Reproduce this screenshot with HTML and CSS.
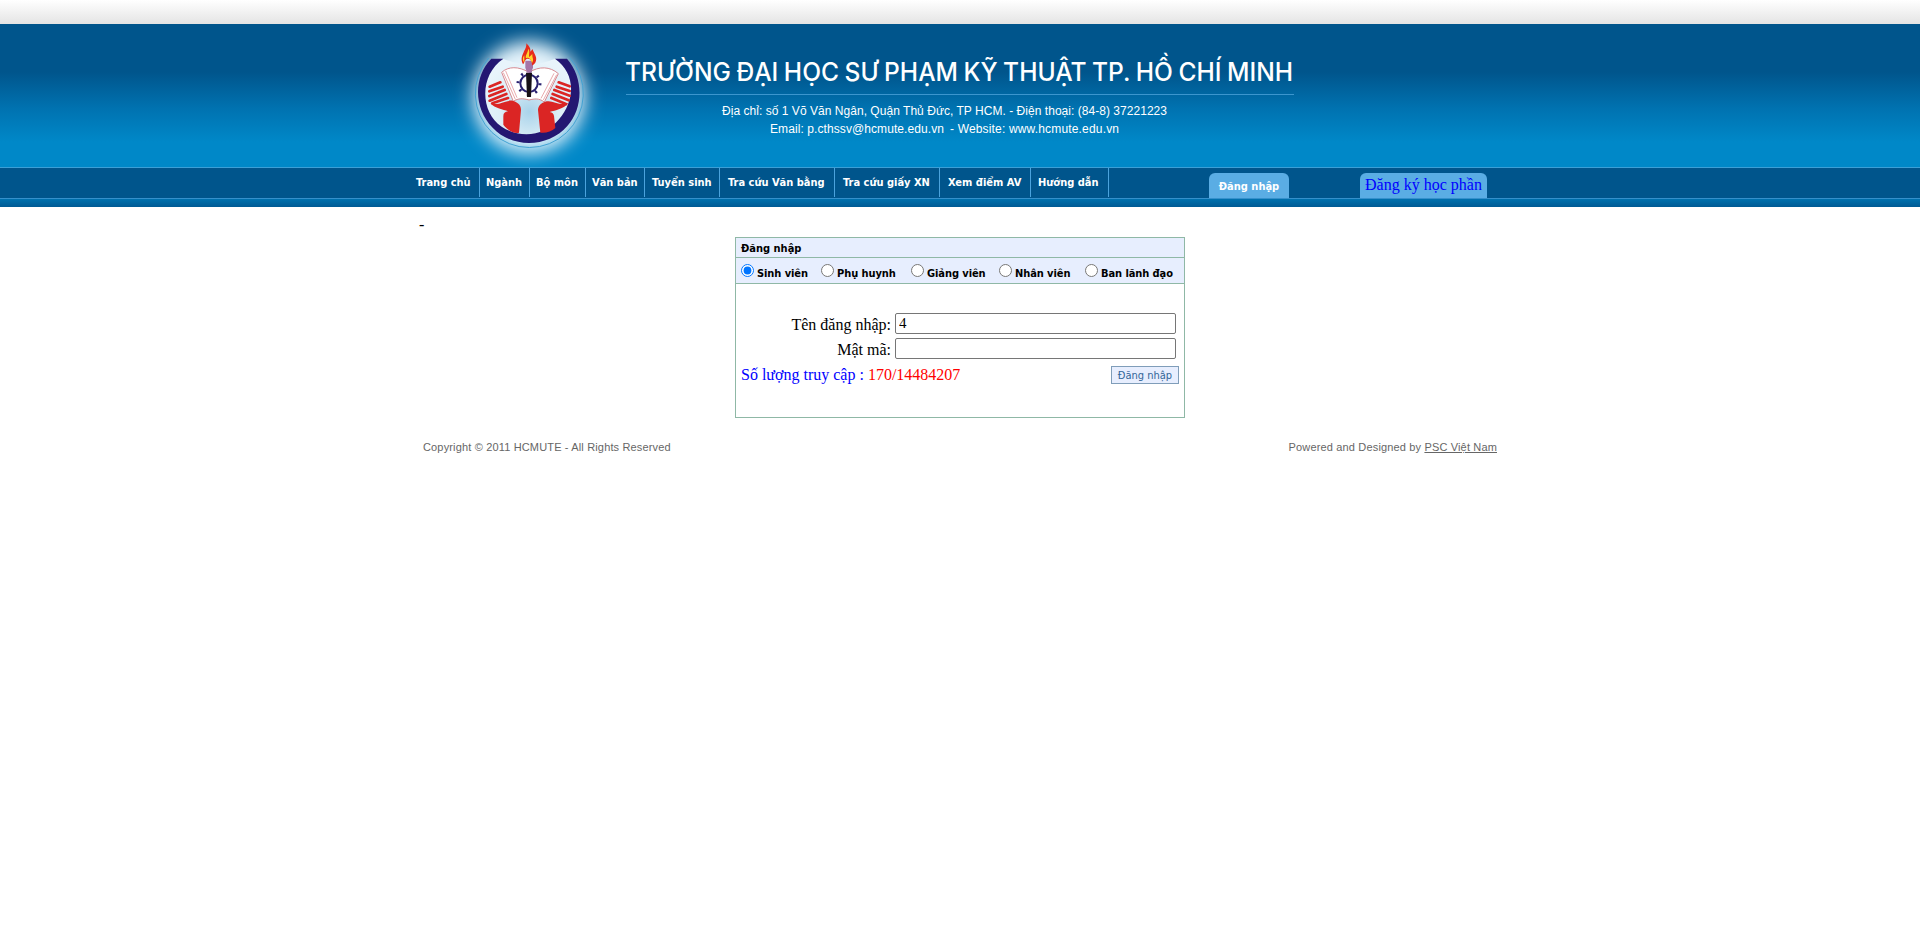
FILE: index.html
```html
<!DOCTYPE html>
<html lang="vi">
<head>
<meta charset="utf-8">
<title>Đăng nhập</title>
<link rel="stylesheet" href="styles.css">
</head>
<body>
<div class="top-strip"></div>
<header class="banner">
  <svg class="logo" width="180" height="143" viewBox="0 12 540 429">
    <defs>
      <filter id="glow" x="-50%" y="-50%" width="200%" height="200%"><feGaussianBlur stdDeviation="27"/></filter>
      <radialGradient id="inner" gradientUnits="userSpaceOnUse" cx="268" cy="275" r="155"><stop offset="0" stop-color="#a9d3ea"/><stop offset=".55" stop-color="#dceef7"/><stop offset="1" stop-color="#e8f4fb"/></radialGradient>
    </defs>
    <circle cx="267" cy="232" r="168" fill="#e4f3fb" filter="url(#glow)"/>
    <path d="M146 114A162 162 0 1 0 390 114" fill="none" stroke="#43a2d3" stroke-width="3"/>
    <path d="M190 116C118 164 119 276 185 320C239 357 316 348 357 298C409 237 405 157 345 116Q267 150 190 116Z" fill="url(#inner)"/>
    <path d="M154 116H190C118 164 119 276 185 320C239 357 316 348 357 298C409 237 405 157 345 116H381C432 174 430 265 382 318C325 383 218 387 158 323C101 265 99 172 154 116Z" fill="#241772"/>
    <path d="M185 157C205 139 235 138 267 157C298 138 330 139 355 161L313 246C297 234 284 236 267 240C250 235 235 234 220 244Z" fill="#fff" stroke="#d78a91" stroke-width="3"/>
    <path d="M190 158L226 238M197 153L231 233M350 164L310 240M342 160L303 235" fill="none" stroke="#dc7e84" stroke-width="2"/>
    <g fill="none" stroke="#db2524" stroke-width="8" stroke-linecap="round">
      <path d="M149 200L181 187M148 214L188 200M148 228L194 210M149 242L199 222M157 250L204 234M389 199L356 187M389 213L350 200M389 227L343 210M386 241L338 222M378 252L334 234"/>
    </g>
    <path d="M151 250C178 258 199 239 218 242C237 248 243 257 243 270L237 338C221 342 201 329 190 314V289C190 279 195 275 204 274C190 268 165 266 151 250ZM386 249C359 259 339 240 320 244C301 249 295 259 294 270L301 338C317 340 335 335 346 324L342 288C341 281 337 278 329 276C347 270 370 268 386 249Z" fill="#db2524"/>
    <circle cx="267" cy="190" r="33" fill="none" stroke="#28206f" stroke-width="9" stroke-dasharray="6 19.9"/>
    <circle cx="267" cy="190" r="26" fill="none" stroke="#28206f" stroke-width="6"/>
    <path d="M258 158H276L273 231H261Z" fill="#171117"/>
    <path d="M256 122H279V143L273 158H261L256 143Z" fill="#a675a7"/>
    <path d="M249 133C240 116 248 105 252 94C257 87 260 76 259 70C266 77 273 84 271 95L278 87C279 97 292 109 288 122C286 131 280 135 276 136C278 121 265 110 256 121C252 126 253 130 249 133Z" fill="#e72b1b"/>
    <path d="M258 115C255 105 264 99 265 86C271 94 265 105 268 111L277 102C276 115 283 117 276 129C273 116 263 110 258 115ZM253 106C247 112 247 122 253 128Z" fill="#ffd52c"/>
  </svg>
  <svg class="banner-text" width="700" height="143" viewBox="620 24 700 143">
    <text class="school" x="625" y="81" textLength="668" lengthAdjust="spacingAndGlyphs">TRƯỜNG ĐẠI HỌC SƯ PHẠM KỸ THUẬT TP. HỒ CHÍ MINH</text>
    <path d="M626 94.5H1294" stroke="#3c96ce"/>
    <text class="contact" x="722" y="115" textLength="445">Địa chỉ: số 1 Võ Văn Ngân, Quận Thủ Đức, TP HCM. - Điện thoại: (84-8) 37221223</text>
    <text class="contact" x="770" y="133" textLength="174">Email: p.cthssv@hcmute.edu.vn</text>
    <text class="contact" x="950" y="133" textLength="169">- Website: www.hcmute.edu.vn</text>
  </svg>
</header>
<div class="navbar">
  <nav class="menu">
    <a class="m1">Trang chủ</a><a class="m2">Ngành</a><a class="m3">Bộ môn</a><a class="m4">Văn bản</a><a class="m5">Tuyển sinh</a><a class="m6">Tra cứu Văn bằng</a><a class="m7">Tra cứu giấy XN</a><a class="m8">Xem điểm AV</a><a class="m9">Hướng dẫn</a>
  </nav>
  <a class="tab tab-login">Đăng nhập</a>
  <a class="tab tab-register">Đăng ký học phần</a>
</div>
<div class="nav-foot"></div>
<main class="page">
  <div class="dash">-</div>
  <form class="login">
    <div class="login-title">Đăng nhập</div>
    <div class="roles">
      <label class="r1"><input type="radio" name="role" checked><span>Sinh viên</span></label>
      <label class="r2"><input type="radio" name="role"><span>Phụ huynh</span></label>
      <label class="r3"><input type="radio" name="role"><span>Giảng viên</span></label>
      <label class="r4"><input type="radio" name="role"><span>Nhân viên</span></label>
      <label class="r5"><input type="radio" name="role"><span>Ban lãnh đạo</span></label>
    </div>
    <div class="fields">
      <div class="row"><label>Tên đăng nhập:</label><input class="field" type="text" value="4"></div>
      <div class="row"><label>Mật mã:</label><input class="field" type="password"></div>
      <div class="bottom"><span class="visits">Số lượng truy cập : <b>170/14484207</b></span><button type="button" class="submit">Đăng nhập</button></div>
    </div>
  </form>
  <footer class="footer"><span class="copy">Copyright © 2011 HCMUTE - All Rights Reserved</span><span class="powered">Powered and Designed by <u>PSC Việt Nam</u></span></footer>
</main>
</body>
</html>
```

FILE: styles.css
```css
* { box-sizing: border-box; }
body { margin: 0; background: #fff; color: #000; font: 16px "Liberation Serif", serif; }
.top-strip { height: 24px; background: linear-gradient(#fff, #e4e4e4); }
.banner { height: 143px; display: flex; padding-left: 440px; background: linear-gradient(#00558c 0, #00558c 48px, #0072b0 84px, #0088c8 118px, #0088c8 100%); }
.school { font: 500 25px Inter, sans-serif; word-spacing: -1px; fill: #fff; }
.contact { font: 12px "Liberation Sans", sans-serif; fill: #fff; }
.navbar { height: 32px; display: flex; border-top: 1px solid #3c9fd6; border-bottom: 1px solid #3590cb; background: #00558c; padding-left: 408px; }
.menu { display: flex; height: 29px; width: 801px; }
.menu a { font: bold 11px/29px "DejaVu Sans Condensed", "DejaVu Sans", sans-serif; font-stretch: condensed; color: #fff; border-right: 1px solid #4ba3dd; white-space: nowrap; flex: none; padding-left: 8px; }
.menu .m1 { width: 72px; } .menu .m2 { width: 50px; padding-left: 6px; } .menu .m3 { width: 56px; padding-left: 6px; } .menu .m4 { width: 59px; padding-left: 6px; } .menu .m5 { width: 75px; padding-left: 7px; }
.m6 { width: 115px; } .m7 { width: 105px; } .m8 { width: 91px; } .menu .m9 { width: 78px; padding-left: 7px; }
.tab { height: 25px; margin-top: 5px; background: #5aade4; border-radius: 6px 6px 0 0; text-align: center; white-space: nowrap; }
.tab-login { width: 80px; color: #fff; font: bold 11px/27px "DejaVu Sans Condensed", "DejaVu Sans", sans-serif; font-stretch: condensed; }
.tab-register { width: 127px; margin-left: 71px; color: #00f; line-height: 24px; }
.nav-foot { height: 8px; background: linear-gradient(#0071ae, #005a94); }
.page { width: 1080px; margin: 0 auto; }
.dash { height: 30px; line-height: 18px; padding: 9px 0 0; text-indent: -1px; }
.login { width: 450px; height: 181px; margin: 0 auto; border: 1px solid #8fb8a6; }
.login-title { height: 20px; padding-left: 5px; border-bottom: 1px solid #8fb8a6; background: #e7eefe; font: bold 11px/21px "DejaVu Sans Condensed", "DejaVu Sans", sans-serif; font-stretch: condensed; }
.roles { height: 26px; display: flex; background: #e7eefe; border-bottom: 1px solid #8fb8a6; padding-left: 5px; font: bold 11px/31px "DejaVu Sans Condensed", "DejaVu Sans", sans-serif; font-stretch: condensed; letter-spacing: -0.08px; }
.roles label { display: flex; flex: none; height: 25px; white-space: nowrap; }
.roles input { width: 13px; height: 13px; margin: 6px 3px 0 0; }
.r1 { width: 80px; } .r2 { width: 90px; } .r3 { width: 88px; } .r4 { width: 86px; }
.fields { padding: 29px 5px 0 5px; }
.row { display: flex; height: 25px; }
.row label { width: 150px; text-align: right; line-height: 24px; }
.field { width: 281px; height: 21px; margin-left: 4px; padding: 1px 3px; border: 1px solid #767676; border-radius: 2px; font: 15px "Liberation Serif", serif; }
.bottom { display: flex; justify-content: space-between; }
.visits { color: #00f; line-height: 24px; }
.visits b { color: #f00; font-weight: normal; }
.submit { width: 68px; height: 18px; margin-top: 3px; padding: 0; border: 1px solid #7f9db9; background: #e7eefe; color: #336699; font: 11px/17px "DejaVu Sans Condensed", "DejaVu Sans", sans-serif; font-stretch: condensed; }
.footer { display: flex; justify-content: space-between; padding: 22px 3px 0; font: 11px/14px "Liberation Sans", sans-serif; letter-spacing: 0.155px; color: #666; }
```
